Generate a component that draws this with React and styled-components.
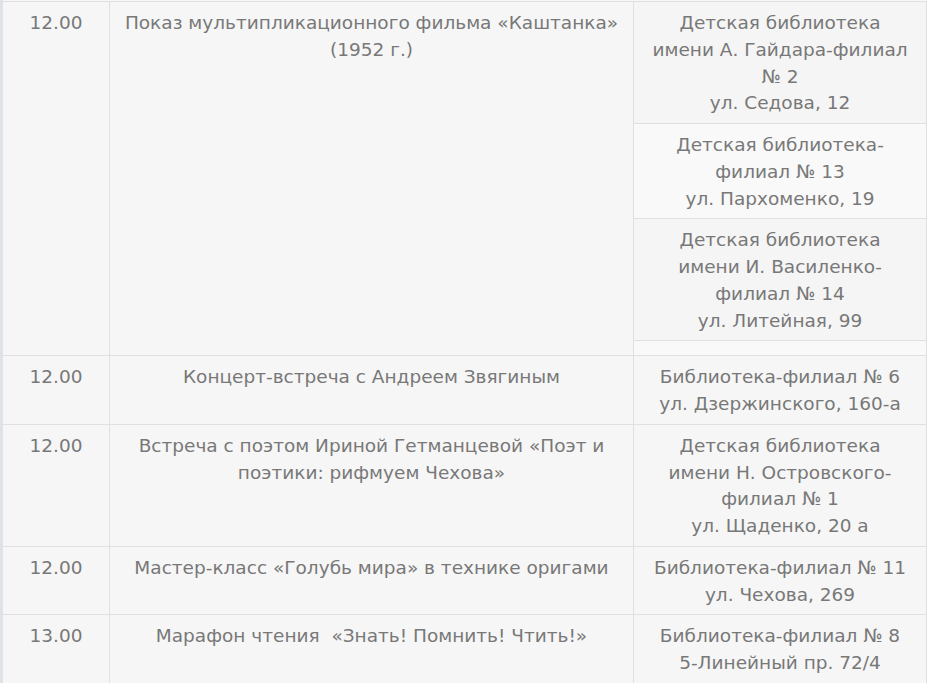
import React from "react";
import styled, { createGlobalStyle } from "styled-components";

const Global = createGlobalStyle`
  html, body { margin: 0; padding: 0; }
  body {
    background: #f7f7f7;
    font-family: "DejaVu Sans", Verdana, sans-serif;
  }
`;

const Page = styled.div`
  border-left: 3px solid #dfe3e7;
  padding-top: 1px;
  min-height: 683px;
  box-sizing: border-box;
`;

const Table = styled.div`
  border-top: 1px solid #e0e0e0;
`;

const Row = styled.div`
  display: grid;
  grid-template-columns: 107px 524px 293px;
  border-bottom: 1px solid #e0e0e0;
  background: #f6f6f6;
`;

const Cell = styled.div`
  border-right: 1px solid #e0e0e0;
  padding: ${(p) => (p.$flush ? "0" : "8px 6px 6px")};
  color: #787878;
  font-size: 18.5px;
  line-height: 26.75px;
  text-align: center;
  min-width: 0;
`;

const Places = styled.div`
  display: flex;
  flex-direction: column;
`;

const Place = styled.div`
  padding: ${(p) => (p.$empty ? "0" : "8px 2px 6px")};
  background: ${(p) => (p.$even ? "#f9f9f9" : "#f5f5f5")};
  border-bottom: ${(p) => (p.$last ? "none" : "1px solid #e0e0e0")};
  min-height: ${(p) => (p.$empty ? "14px" : "auto")};
  box-sizing: border-box;
`;

const Line = styled.div``;

const rows = [
  {
    time: "12.00",
    event: "Показ мультипликационного фильма «Каштанка» (1952 г.)",
    places: [
      ["Детская библиотека", "имени А. Гайдара-филиал", "№ 2", "ул. Седова, 12"],
      ["Детская библиотека-", "филиал № 13", "ул. Пархоменко, 19"],
      ["Детская библиотека", "имени И. Василенко-", "филиал № 14", "ул. Литейная, 99"],
      [],
    ],
  },
  {
    time: "12.00",
    event: "Концерт-встреча с Андреем Звягиным",
    places: [["Библиотека-филиал № 6", "ул. Дзержинского, 160-а"]],
  },
  {
    time: "12.00",
    event: "Встреча с поэтом Ириной Гетманцевой «Поэт и поэтики: рифмуем Чехова»",
    places: [["Детская библиотека", "имени Н. Островского-", "филиал № 1", "ул. Щаденко, 20 а"]],
  },
  {
    time: "12.00",
    event: "Мастер-класс «Голубь мира» в технике оригами",
    places: [["Библиотека-филиал № 11", "ул. Чехова, 269"]],
  },
  {
    time: "13.00",
    event: "Марафон чтения\u00a0 «Знать! Помнить! Чтить!»",
    places: [["Библиотека-филиал № 8", "5-Линейный пр. 72/4"]],
  },
];

export default function App() {
  return (
    <>
      <Global />
      <Page>
        <Table>
          {rows.map((r, i) => (
            <Row key={i}>
              <Cell>{r.time}</Cell>
              <Cell>{r.event}</Cell>
              {r.places.length > 1 ? (
                <Cell $flush>
                  <Places>
                    {r.places.map((lines, j) => (
                      <Place
                        key={j}
                        $even={j % 2 === 1}
                        $last={j === r.places.length - 1}
                        $empty={lines.length === 0}
                      >
                        {lines.map((l, k) => (
                          <Line key={k}>{l}</Line>
                        ))}
                      </Place>
                    ))}
                  </Places>
                </Cell>
              ) : (
                <Cell>
                  {r.places[0].map((l, k) => (
                    <Line key={k}>{l}</Line>
                  ))}
                </Cell>
              )}
            </Row>
          ))}
        </Table>
      </Page>
    </>
  );
}
